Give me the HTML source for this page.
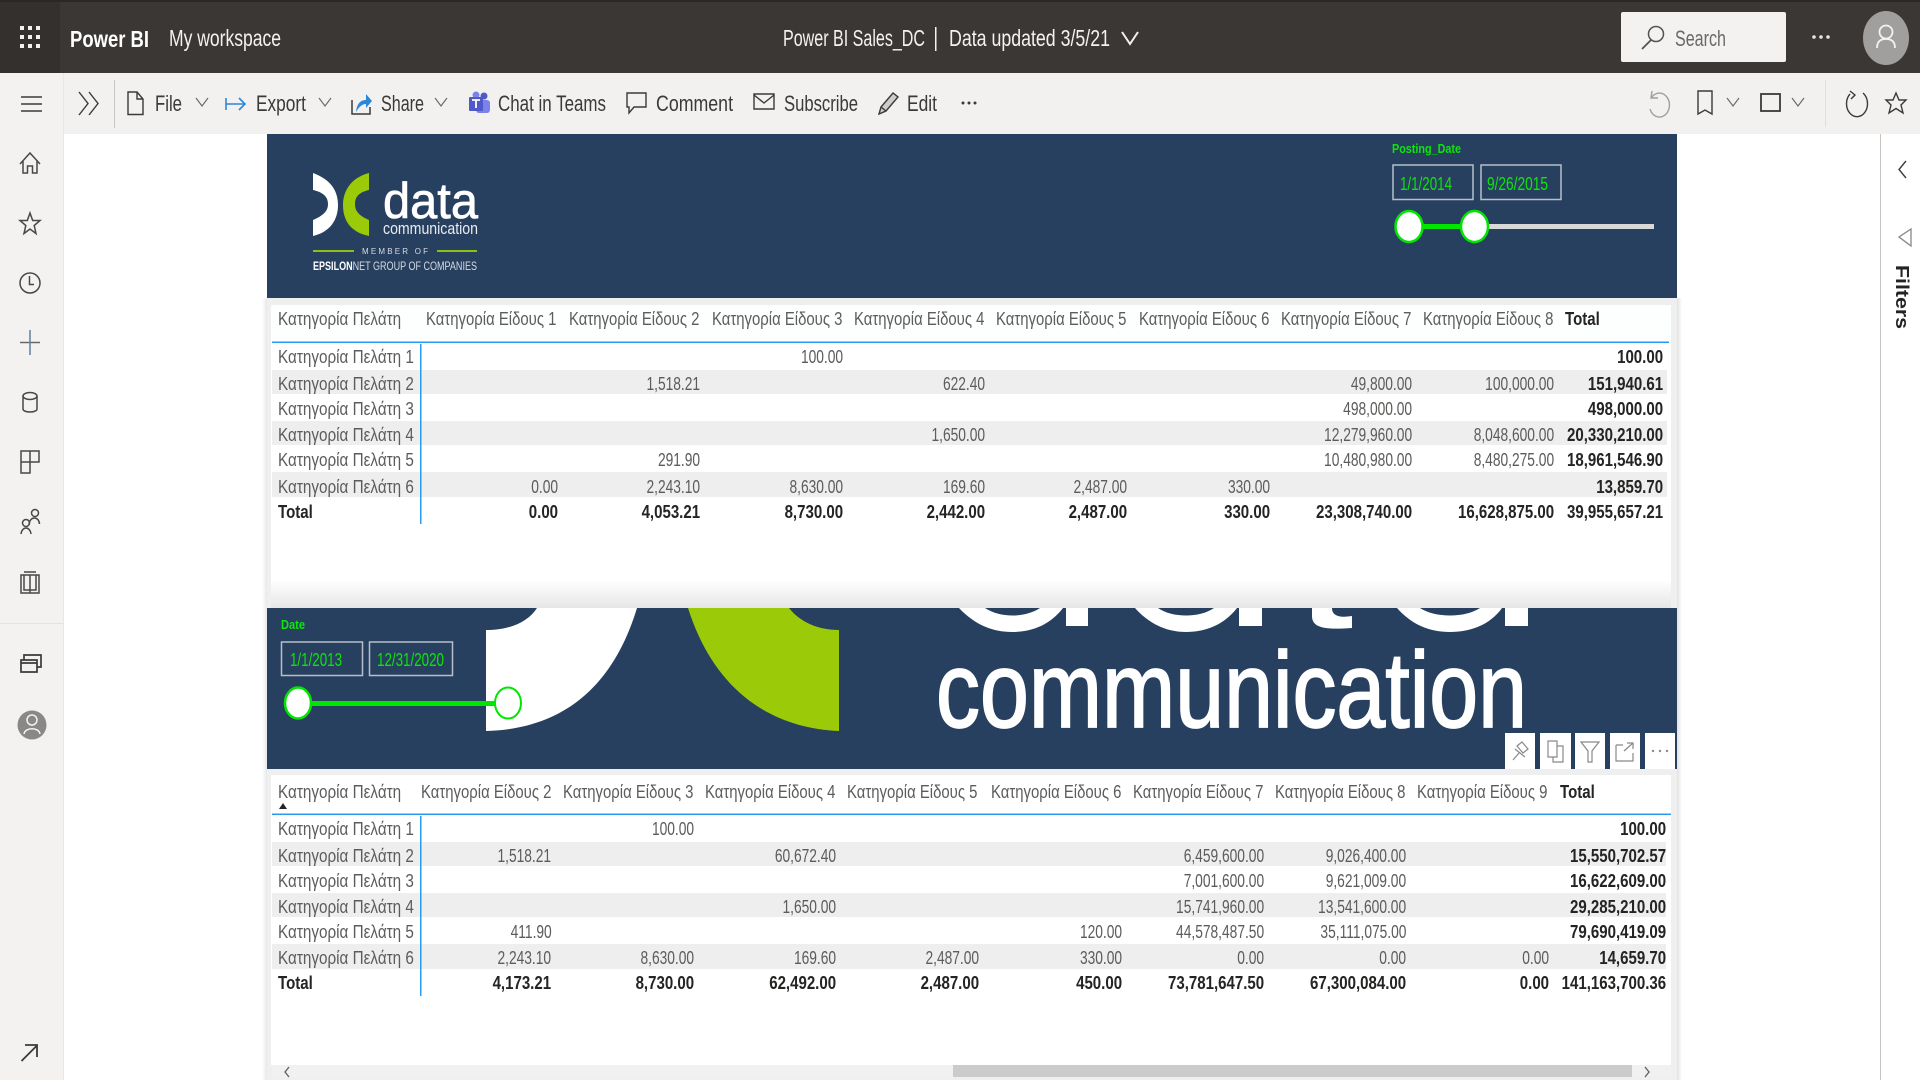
<!DOCTYPE html>
<html lang="en"><head><meta charset="utf-8"><title>Power BI Sales_DC</title>
<style>
html,body{margin:0;padding:0;background:#fff;width:1920px;height:1080px;overflow:hidden}
body{position:relative;font-family:"Liberation Sans",sans-serif}
svg{position:absolute;left:0;top:0}
svg text{font-family:"Liberation Sans",sans-serif}
.row{position:absolute;left:0;width:1920px;height:20px}
.row span{position:absolute;top:0;line-height:20px;font-size:18px;white-space:nowrap;color:#5e5c5a;transform-origin:100% 50%;transform:scaleX(.765)}
.row span.l{left:278px;transform-origin:0 50%;transform:scaleX(.848)}
.row span.h{transform-origin:0 50%;transform:scaleX(.828)}
.row span.B{color:#252423;font-weight:700;transform:scaleX(.835)}
.row span.l.B{transform:scaleX(.835)}
.a1{right:1362px}.a2{right:1220px}.a3{right:1077px}.a4{right:935px}.a5{right:793px}.a6{right:650px}.a7{right:508px}.a8{right:366px}.a9{right:256.5px}
.b1{right:1368.5px}.b2{right:1226px}.b3{right:1084px}.b4{right:940.5px}.b5{right:798px}.b6{right:656px}.b7{right:514px}.b8{right:371px}.b9{right:254px}
</style></head>
<body>
<svg width="1920" height="1080" viewBox="0 0 1920 1080" xmlns="http://www.w3.org/2000/svg">
<defs>
<linearGradient id="fade" x1="0" y1="0" x2="0" y2="1"><stop offset="0" stop-color="#fff"/><stop offset="1" stop-color="#e6e6e6"/></linearGradient>
<linearGradient id="sr" x1="0" y1="0" x2="1" y2="0"><stop offset="0" stop-color="#e2e2e2"/><stop offset="1" stop-color="#fff"/></linearGradient>
<linearGradient id="sl" x1="1" y1="0" x2="0" y2="0"><stop offset="0" stop-color="#e8e8e8"/><stop offset="1" stop-color="#fff"/></linearGradient>
</defs>
<rect width="1920" height="1080" fill="#fff"/>
<!-- top bar -->
<rect width="1920" height="73" fill="#3b3735"/>
<rect width="60" height="73" fill="#33302d"/>
<rect width="1920" height="2" fill="#2a2826"/>
<g fill="#f3f2f1"><rect x="20" y="26" width="4" height="4"/><rect x="28" y="26" width="4" height="4"/><rect x="36" y="26" width="4" height="4"/><rect x="20" y="35" width="4" height="4"/><rect x="28" y="35" width="4" height="4"/><rect x="36" y="35" width="4" height="4"/><rect x="20" y="44" width="4" height="4"/><rect x="28" y="44" width="4" height="4"/><rect x="36" y="44" width="4" height="4"/></g>
<g fill="#fff">
<text x="70" y="47" font-size="23" font-weight="700" textLength="79" lengthAdjust="spacingAndGlyphs">Power BI</text>
<text x="169" y="46" font-size="23" fill="#f3f2f1" textLength="112" lengthAdjust="spacingAndGlyphs">My workspace</text>
<text x="783" y="46" font-size="23" fill="#f3f2f1" textLength="142" lengthAdjust="spacingAndGlyphs">Power BI Sales_DC</text>
<rect x="935" y="27" width="1.500" height="24" fill="#f3f2f1"/>
<text x="949" y="46" font-size="23" fill="#f3f2f1" textLength="161" lengthAdjust="spacingAndGlyphs">Data updated 3/5/21</text>
</g>
<path d="M1122 32 L1130 44 L1138 32" fill="none" stroke="#f3f2f1" stroke-width="2"/>
<rect x="1621" y="12" width="165" height="50" rx="2" fill="#f3f2f1"/>
<circle cx="1656" cy="34" r="7.500" fill="none" stroke="#55524f" stroke-width="1.500"/>
<path d="M1651 40 L1642 49" stroke="#55524f" stroke-width="1.800"/>
<text x="1675" y="46" font-size="22" fill="#6b6967" textLength="51" lengthAdjust="spacingAndGlyphs">Search</text>
<g fill="#e8e6e4"><circle cx="1814" cy="37" r="1.800"/><circle cx="1821" cy="37" r="1.800"/><circle cx="1828" cy="37" r="1.800"/></g>
<ellipse cx="1886" cy="38" rx="23" ry="27" fill="#a19f9d"/>
<circle cx="1886" cy="32" r="6.500" fill="none" stroke="#f3f2f1" stroke-width="1.800"/>
<path d="M1877 48 C1877 41 1881 39 1886 39 C1891 39 1895 41 1895 48" fill="none" stroke="#f3f2f1" stroke-width="1.800"/>
<!-- command bar + nav -->
<rect x="0" y="73" width="1920" height="61" fill="#f3f1ef"/>
<rect x="0" y="73" width="63" height="1007" fill="#f3f2f0"/>
<rect x="63" y="73" width="1" height="1007" fill="#e9e7e5"/>
<rect x="0" y="623" width="63" height="1" fill="#e4e2e0"/>
<g fill="none" stroke="#3b3a39" stroke-width="1.400">
<path d="M21 97 H42 M21 104 H42 M21 111 H42"/>
<path d="M79 92 L88 103.500 L79 115 M89 92 L98 103.500 L89 115"/>
<path d="M128 92 H137 L143 99 V114.500 H128 Z M137 92 V99 H143"/>
<path d="M627 93 H646 V107 H634 L629 113 V107 H627 Z"/>
<path d="M754 94 H774 V109 H754 Z M754 95 L764 103 L774 95"/>
<path d="M879 114 L881 107 L893 93 L898 97 L886 111 Z M881 107 L886 111" fill="#605e5c" fill-opacity=".25"/>
<path d="M1714 91 H1700 V114 L1707 110 L1714 114 Z" transform="translate(-2,0)"/>
<rect x="1761" y="94" width="19" height="17" stroke-width="1.800"/>
<path d="M1863 92 A10.500 13 0 1 1 1850 93 M1850 90 L1855 94 L1851 98" transform="translate(0,1)"/>
<path d="M1896 93 L1899 100 L1906 100 L1901 105 L1903 113 L1896 108.500 L1889 113 L1891 105 L1886 100 L1893 100 Z"/>
</g>
<path d="M196 98 L202 106 L208 98 M319 98 L325 106 L331 98 M435 98 L441 106 L447 98 M1727 98 L1733 106 L1739 98 M1792 98 L1798 106 L1804 98" fill="none" stroke="#6e6c6a" stroke-width="1.200"/>
<rect x="114" y="80" width="1" height="48" fill="#c8c6c4"/>
<rect x="1825" y="80" width="1" height="47" fill="#e1dfdd"/>
<path d="M1652 97 A10 12 0 1 1 1650 109 M1652 91 L1651 98 L1658 98" fill="none" stroke="#a19f9d" stroke-width="1.400"/>
<path d="M226 98 V110 M226 104 H245 M239 98 L245 104 L239 110" fill="none" stroke="#2b88d8" stroke-width="1.600"/>
<path d="M352 100 V114 H370 V107" fill="none" stroke="#3b3a39" stroke-width="1.500"/>
<path d="M356 112 C357 103 361 100 366 100 V94 L372 101 L366 108 V104 C362 104 359 107 356 112 Z" fill="#2b88d8"/>
<circle cx="484" cy="96" r="3.500" fill="#5059c9"/><circle cx="476" cy="95" r="3.500" fill="#7b83eb"/>
<rect x="476" y="100" width="14" height="13" rx="3" fill="#7b83eb"/>
<rect x="469" y="97" width="14" height="14" rx="1" fill="#5059c9"/>
<path d="M472 100 H480 M476 100 V108" stroke="#fff" stroke-width="1.800"/>
<g fill="#3b3a39"><circle cx="963" cy="103" r="1.500"/><circle cx="969" cy="103" r="1.500"/><circle cx="975" cy="103" r="1.500"/></g>
<g fill="#3b3a39" font-size="22">
<text x="155" y="111" textLength="27" lengthAdjust="spacingAndGlyphs">File</text>
<text x="256" y="111" textLength="50" lengthAdjust="spacingAndGlyphs">Export</text>
<text x="381" y="111" textLength="43" lengthAdjust="spacingAndGlyphs">Share</text>
<text x="498" y="111" textLength="108" lengthAdjust="spacingAndGlyphs">Chat in Teams</text>
<text x="656" y="111" textLength="77" lengthAdjust="spacingAndGlyphs">Comment</text>
<text x="784" y="111" textLength="74" lengthAdjust="spacingAndGlyphs">Subscribe</text>
<text x="907" y="111" textLength="30" lengthAdjust="spacingAndGlyphs">Edit</text>
</g>
<!-- left nav icons -->
<g fill="none" stroke="#4a4846" stroke-width="1.500">
<path d="M20 164 L30 153 L40 164 M23 161 V173 H27.500 V166 H32.500 V173 H37 V161"/>
<path d="M30 213 L32.700 220.500 L40 220.500 L34.200 225.500 L36 233.500 L30 229 L24 233.500 L25.800 225.500 L20 220.500 L27.300 220.500 Z"/>
<circle cx="30" cy="283" r="10"/><path d="M29.500 276 V284.500 H34"/>
<path d="M20 342.500 H40" stroke="#6a6866"/><path d="M30 330 V355" stroke="#5e7f9c"/>
<path d="M23 396 V409 C23 413 37 413 37 409 V396"/><ellipse cx="30" cy="396" rx="7" ry="3.500"/>
<path d="M21 451 H39 V462 H30 V473 H21 Z M30 451 V473 M21 462 H30"/>
<circle cx="35" cy="513" r="3.500"/><path d="M29 524 C30 516 39 516 39.500 524"/>
<circle cx="26" cy="523" r="3.500"/><path d="M21 534 C22 526 30 526 31 534"/>
<path d="M21 575 H39 V593 H21 Z M30 575 V593 M24 575 V590 H30 H36 V575 M24 572 H36"/>
<path d="M21 660 H37 V672 H21 Z M24 660 V655 H41 V667 H37 M21 663 H37" stroke="#3b3a39" stroke-width="1.700"/>
<path d="M21.500 1061 L37 1045.500 M25 1045 H37 V1057" stroke="#3b3a39" stroke-width="1.800"/>
</g>
<circle cx="32" cy="725" r="14.500" fill="#8a8886"/>
<circle cx="32" cy="720" r="5" fill="none" stroke="#f3f2f1" stroke-width="1.500"/>
<path d="M24 734 C25 727 39 727 40 734" fill="none" stroke="#f3f2f1" stroke-width="1.500"/>
<!-- right pane -->
<rect x="1880" y="134" width="1" height="946" fill="#c8c6c4"/>
<path d="M1906 161 L1899 169.500 L1906 178" fill="none" stroke="#3b3a39" stroke-width="1.400"/>
<path d="M1911 229 V246 L1899 237 Z" fill="none" stroke="#8a8886" stroke-width="1.300"/>
<text transform="translate(1896,265) rotate(90)" font-size="18" font-weight="700" fill="#252423" textLength="64" lengthAdjust="spacingAndGlyphs">Filters</text>
<!-- report panel -->
<rect x="262" y="298" width="5" height="782" fill="url(#sl)"/>
<rect x="1677" y="298" width="5" height="782" fill="url(#sr)"/>
<rect x="267" y="298" width="1410" height="782" fill="#efefef"/>
<rect x="271" y="305" width="1400" height="290" fill="#fff"/>
<rect x="271" y="580" width="1400" height="28" fill="url(#fade)"/>
<rect x="271" y="775" width="1400" height="290" fill="#fff"/>
<!-- navy 1 -->
<rect x="267" y="134" width="1410" height="164" fill="#28405f"/>
<path d="M313 173 C332 180 338 192 338 205 C338 220 330 232 313 236 L313 220 C322 216 328 212 328 204 C328 196 322 192 313 190 Z" fill="#fff"/>
<path d="M369 173 C350 178 343 192 343 205 C343 220 350 232 369 236 L369 220 C360 216 355 212 355 204 C355 196 360 192 369 190 Z" fill="#9bcb08"/>
<text x="383" y="218" font-size="50" fill="#fff" stroke="#fff" stroke-width=".7" textLength="95" lengthAdjust="spacingAndGlyphs">data</text>
<text x="383" y="234" font-size="17" fill="#e8ecf0" textLength="95" lengthAdjust="spacingAndGlyphs">communication</text>
<rect x="313" y="250" width="41" height="2" fill="#8fbf10"/><rect x="437" y="250" width="40" height="2" fill="#8fbf10"/>
<text x="362" y="254" font-size="8" fill="#d5dae0" textLength="66" lengthAdjust="spacing">MEMBER OF</text>
<text x="313" y="270" font-size="12" fill="#d5dae0" textLength="164" lengthAdjust="spacingAndGlyphs"><tspan font-weight="700" fill="#fff">EPSILON</tspan>NET GROUP OF COMPANIES</text>
<!-- slicer 1 -->
<text x="1392" y="153" font-size="13" font-weight="700" fill="#0de30d" textLength="69" lengthAdjust="spacingAndGlyphs">Posting_Date</text>
<g fill="none" stroke="#b6bfca" stroke-width="1.500"><rect x="1393" y="165" width="80" height="34.500"/><rect x="1481" y="165" width="80" height="34.500"/></g>
<g font-size="18" fill="#0de30d"><text x="1400" y="190" textLength="52" lengthAdjust="spacingAndGlyphs">1/1/2014</text><text x="1487" y="190" textLength="61" lengthAdjust="spacingAndGlyphs">9/26/2015</text></g>
<rect x="1470" y="224" width="184" height="5" fill="#d9d9d9"/>
<rect x="1409" y="224" width="65" height="5" fill="#00e600"/>
<ellipse cx="1409" cy="226.500" rx="13.500" ry="15.500" fill="#fff" stroke="#00e600" stroke-width="2.500"/>
<ellipse cx="1474.500" cy="226.500" rx="13.500" ry="15.500" fill="#fff" stroke="#00e600" stroke-width="2.500"/>
<!-- navy 2 -->
<rect x="267" y="608" width="1410" height="161" fill="#28405f"/>
<path d="M486 630 C510 630 528 622 537 608 L637 608 C612 690 560 729 486 731 Z" fill="#fff"/>
<path d="M688 608 L789 608 C800 622 818 630 839 630 L839 731 C770 728 714 690 688 608 Z" fill="#9bcb08"/>
<g fill="#fff">
<path d="M959 608 C975 625 993 632 1012 632 C1032 632 1050 625 1063 608 L1040 608 C1025 618 1000 618 985 608 Z"/>
<rect x="1066" y="608" width="22" height="18"/>
<path d="M1135 608 C1150 625 1168 632 1186 632 C1205 632 1224 625 1237 608 L1214 608 C1200 618 1172 618 1158 608 Z"/>
<rect x="1239" y="608" width="23" height="18"/>
<path d="M1312 608 V616 C1312 628 1325 630 1352 628 V616 C1340 618 1332 616 1332 608 Z"/>
<path d="M1397 608 C1412 625 1430 632 1450 632 C1470 632 1490 625 1502 608 L1480 608 C1465 618 1435 618 1420 608 Z"/>
<rect x="1505" y="608" width="23" height="18"/>
</g>
<text x="936" y="727" font-size="108" fill="#fff" stroke="#fff" stroke-width="1.800" textLength="591" lengthAdjust="spacingAndGlyphs">communication</text>
<text x="281" y="629" font-size="13" font-weight="700" fill="#0de30d" textLength="24" lengthAdjust="spacingAndGlyphs">Date</text>
<g fill="none" stroke="#b6bfca" stroke-width="1.500"><rect x="281.500" y="642" width="81" height="33.500"/><rect x="369.500" y="642" width="83" height="33.500"/></g>
<g font-size="18" fill="#0de30d"><text x="290" y="666" textLength="52" lengthAdjust="spacingAndGlyphs">1/1/2013</text><text x="377" y="666" textLength="67" lengthAdjust="spacingAndGlyphs">12/31/2020</text></g>
<rect x="298" y="701" width="210" height="5" fill="#00e600"/>
<ellipse cx="298" cy="703" rx="13" ry="15.500" fill="#fff" stroke="#00e600" stroke-width="2.500"/>
<ellipse cx="508" cy="703" rx="13" ry="15.500" fill="#fff" stroke="#00e600" stroke-width="2"/>
<!-- visual header -->
<g fill="#fff"><rect x="1505" y="733" width="30" height="36"/><rect x="1540" y="733" width="31" height="36"/><rect x="1575" y="733" width="30" height="36"/><rect x="1610" y="733" width="30" height="36"/><rect x="1645" y="733" width="30" height="36"/></g>
<g fill="none" stroke="#8a8886" stroke-width="1.200">
<path d="M1513 760 L1519 753 M1515 749 L1525 757 M1517 746 L1522 742 L1528 749 L1523 753 Z"/>
<path d="M1548 741 H1557 V757 H1548 Z M1557 746 H1563 V762 H1553 V757"/>
<path d="M1581 742 H1599 L1592 751 V762 H1588 V751 Z"/>
<path d="M1616 745 V761 H1633 V753 M1624 751 L1633 743 M1627 743 H1633 V749 M1616 745 H1623"/>
</g>
<g fill="#8a8886"><circle cx="1653" cy="751" r="1.200"/><circle cx="1660" cy="751" r="1.200"/><circle cx="1667" cy="751" r="1.200"/></g>
<!-- table bands -->
<rect x="271" y="305" width="1400" height="37" fill="#fdfefe"/>
<g fill="#eeeeee">
<rect x="272" y="370" width="1395" height="24"/><rect x="272" y="421" width="1395" height="24"/><rect x="272" y="472" width="1395" height="25"/>
<rect x="272" y="842" width="1394" height="24"/><rect x="272" y="893" width="1394" height="24"/><rect x="272" y="944" width="1394" height="25"/>
</g>
<g fill="#2b9af3">
<rect x="272" y="341.500" width="1397" height="1.500"/><rect x="420" y="344" width="1.500" height="180"/>
<rect x="272" y="813.500" width="1399" height="1.500"/><rect x="420" y="816" width="1.500" height="180"/>
</g>
<path d="M279 809 L283 803 L287 809 Z" fill="#252423"/>
<!-- scrollbar -->
<rect x="272" y="1065" width="1399" height="12" fill="#f1f1f1"/>
<rect x="953" y="1065" width="679" height="12" fill="#cbcbcb"/>
<path d="M289 1067 L285 1072 L289 1077 M1645 1067 L1649 1072 L1645 1077" fill="none" stroke="#605e5c" stroke-width="1.300"/>
</svg>

<!-- table 1 -->
<div class="row" style="top:309px">
<span class="l">Κατηγορία Πελάτη</span><span class="h" style="left:426px">Κατηγορία Είδους 1</span><span class="h" style="left:569px">Κατηγορία Είδους 2</span><span class="h" style="left:712px">Κατηγορία Είδους 3</span><span class="h" style="left:854px">Κατηγορία Είδους 4</span><span class="h" style="left:996px">Κατηγορία Είδους 5</span><span class="h" style="left:1139px">Κατηγορία Είδους 6</span><span class="h" style="left:1281px">Κατηγορία Είδους 7</span><span class="h" style="left:1423px">Κατηγορία Είδους 8</span><span class="h B" style="left:1565px;transform-origin:0 50%">Total</span>
</div>
<div class="row" style="top:347px"><span class="l">Κατηγορία Πελάτη 1</span><span class="a3">100.00</span><span class="a9 B">100.00</span></div>
<div class="row" style="top:374px"><span class="l">Κατηγορία Πελάτη 2</span><span class="a2">1,518.21</span><span class="a4">622.40</span><span class="a7">49,800.00</span><span class="a8">100,000.00</span><span class="a9 B">151,940.61</span></div>
<div class="row" style="top:399px"><span class="l">Κατηγορία Πελάτη 3</span><span class="a7">498,000.00</span><span class="a9 B">498,000.00</span></div>
<div class="row" style="top:425px"><span class="l">Κατηγορία Πελάτη 4</span><span class="a4">1,650.00</span><span class="a7">12,279,960.00</span><span class="a8">8,048,600.00</span><span class="a9 B">20,330,210.00</span></div>
<div class="row" style="top:450px"><span class="l">Κατηγορία Πελάτη 5</span><span class="a2">291.90</span><span class="a7">10,480,980.00</span><span class="a8">8,480,275.00</span><span class="a9 B">18,961,546.90</span></div>
<div class="row" style="top:477px"><span class="l">Κατηγορία Πελάτη 6</span><span class="a1">0.00</span><span class="a2">2,243.10</span><span class="a3">8,630.00</span><span class="a4">169.60</span><span class="a5">2,487.00</span><span class="a6">330.00</span><span class="a9 B">13,859.70</span></div>
<div class="row" style="top:502px"><span class="l B">Total</span><span class="a1 B">0.00</span><span class="a2 B">4,053.21</span><span class="a3 B">8,730.00</span><span class="a4 B">2,442.00</span><span class="a5 B">2,487.00</span><span class="a6 B">330.00</span><span class="a7 B">23,308,740.00</span><span class="a8 B">16,628,875.00</span><span class="a9 B">39,955,657.21</span></div>

<!-- table 2 -->
<div class="row" style="top:782px">
<span class="l">Κατηγορία Πελάτη</span><span class="h" style="left:421px">Κατηγορία Είδους 2</span><span class="h" style="left:563px">Κατηγορία Είδους 3</span><span class="h" style="left:705px">Κατηγορία Είδους 4</span><span class="h" style="left:847px">Κατηγορία Είδους 5</span><span class="h" style="left:990.5px">Κατηγορία Είδους 6</span><span class="h" style="left:1133px">Κατηγορία Είδους 7</span><span class="h" style="left:1275px">Κατηγορία Είδους 8</span><span class="h" style="left:1417px">Κατηγορία Είδους 9</span><span class="h B" style="left:1560px;transform-origin:0 50%">Total</span>
</div>
<div class="row" style="top:819px"><span class="l">Κατηγορία Πελάτη 1</span><span class="b2">100.00</span><span class="b9 B">100.00</span></div>
<div class="row" style="top:846px"><span class="l">Κατηγορία Πελάτη 2</span><span class="b1">1,518.21</span><span class="b3">60,672.40</span><span class="b6">6,459,600.00</span><span class="b7">9,026,400.00</span><span class="b9 B">15,550,702.57</span></div>
<div class="row" style="top:871px"><span class="l">Κατηγορία Πελάτη 3</span><span class="b6">7,001,600.00</span><span class="b7">9,621,009.00</span><span class="b9 B">16,622,609.00</span></div>
<div class="row" style="top:897px"><span class="l">Κατηγορία Πελάτη 4</span><span class="b3">1,650.00</span><span class="b6">15,741,960.00</span><span class="b7">13,541,600.00</span><span class="b9 B">29,285,210.00</span></div>
<div class="row" style="top:922px"><span class="l">Κατηγορία Πελάτη 5</span><span class="b1">411.90</span><span class="b5">120.00</span><span class="b6">44,578,487.50</span><span class="b7">35,111,075.00</span><span class="b9 B">79,690,419.09</span></div>
<div class="row" style="top:948px"><span class="l">Κατηγορία Πελάτη 6</span><span class="b1">2,243.10</span><span class="b2">8,630.00</span><span class="b3">169.60</span><span class="b4">2,487.00</span><span class="b5">330.00</span><span class="b6">0.00</span><span class="b7">0.00</span><span class="b8">0.00</span><span class="b9 B">14,659.70</span></div>
<div class="row" style="top:973px"><span class="l B">Total</span><span class="b1 B">4,173.21</span><span class="b2 B">8,730.00</span><span class="b3 B">62,492.00</span><span class="b4 B">2,487.00</span><span class="b5 B">450.00</span><span class="b6 B">73,781,647.50</span><span class="b7 B">67,300,084.00</span><span class="b8 B">0.00</span><span class="b9 B">141,163,700.36</span></div>
</body></html>
